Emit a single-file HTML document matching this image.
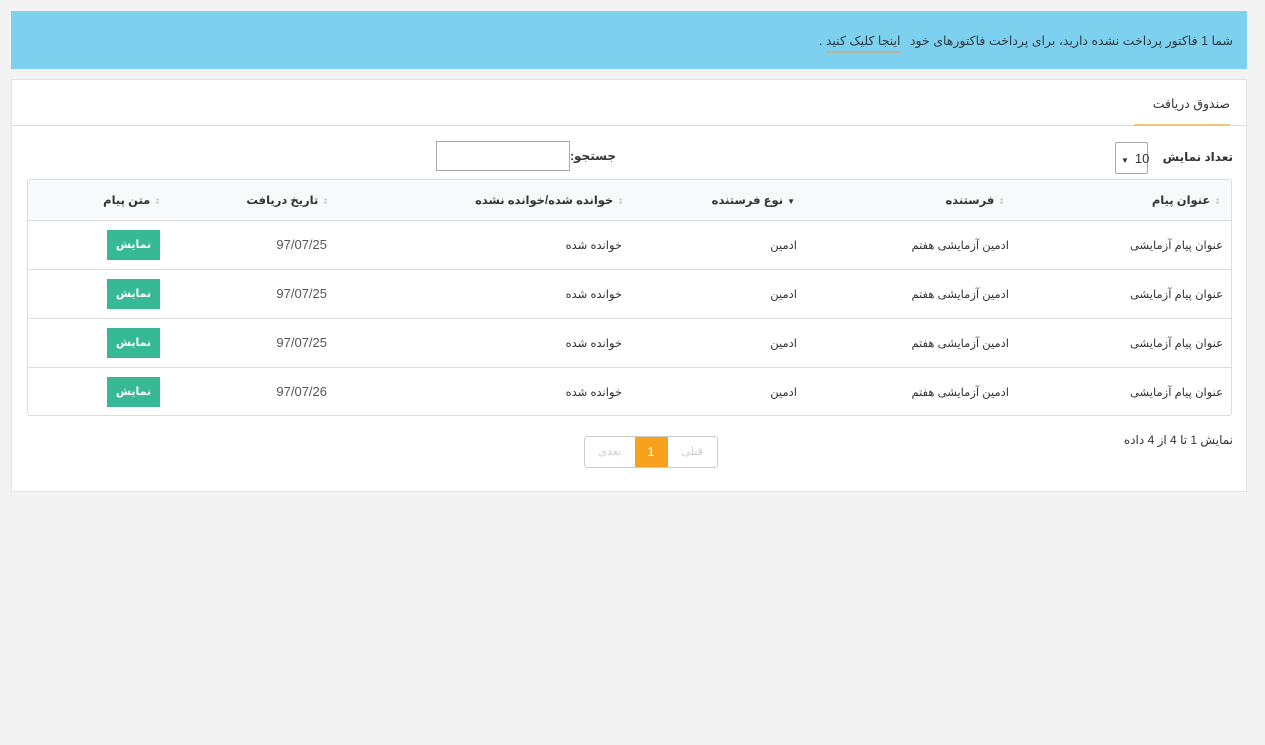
<!DOCTYPE html>
<html dir="rtl"><head><meta charset="utf-8"><style>
*{box-sizing:border-box;margin:0;padding:0}
body{width:1265px;height:745px;background:#f3f3f3;font-family:"Liberation Sans","DejaVu Sans",sans-serif;color:#333;font-size:12px;position:relative;overflow:hidden}
.alert{position:absolute;left:11px;top:11px;width:1236px;height:58px;background:#7dd1ef;padding:22px 14px 0 0;font-size:12.5px;color:#2b3a40}
.alert a{color:#2b3a40;text-decoration:none;border-bottom:2px solid #b9b59a;padding-bottom:3px;margin-right:6px}
.panel{position:absolute;left:11px;top:79px;width:1236px;height:413px;background:#fff;border:1px solid #e3e3e3}
.ph{height:46px;border-bottom:1px solid #ddd;position:relative}
.ph span{position:absolute;right:16px;top:16px;font-size:12.5px}
.ph i{position:absolute;right:16px;width:96px;bottom:-1px;height:2px;background:#f2c37a}
.lbl{position:absolute;font-weight:bold;font-size:12px}
.sel{position:absolute;left:1103px;top:62px;width:33px;height:32px;border:1px solid #aaa;border-radius:2px;font-size:13px;padding:8px 0 0 5px;direction:ltr;white-space:nowrap}
.sel b{font-size:8px;font-weight:normal;margin-right:6px}
.inp{position:absolute;left:424px;top:61px;width:134px;height:30px;border:1px solid #aaa}
.tbl{position:absolute;left:15px;top:99px;width:1205px;height:237px;border:1px solid #ddd;border-radius:3px;overflow:hidden}
table{border-collapse:collapse;width:100%;table-layout:fixed}
th{height:40px;background:#f7f9fb;font-weight:bold;font-size:11.5px;text-align:right;padding-right:10px;border-bottom:1px solid #ddd}
td{height:49px;font-size:11.5px;text-align:right;padding-right:8px;border-top:1px solid #ddd}
tr:nth-child(2) td{border-top:none}
th s{text-decoration:none;color:#ccc;font-size:8px;margin-left:4px}
.btn{display:inline-block;width:53px;height:30px;background:#36b994;color:#fff;font-weight:bold;text-align:center;line-height:30px;font-size:11px;margin-right:-3px}
.date{color:#555;font-size:13px}
.info{position:absolute;top:353px;font-size:12px}
.pg{position:absolute;left:572px;top:356px;height:32px;width:134px;border:1px solid #ccc;border-radius:3px;display:flex;direction:ltr;color:#ccc;font-size:11px}
.pg div{flex:1;text-align:center;line-height:30px}
.pg .a{background:#f7a11c;color:#fff;font-size:13px;flex:0 0 33px}
</style></head><body>
<div class="alert">شما 1 فاکتور پرداخت نشده دارید، برای پرداخت فاکتورهای خود <a>اینجا کلیک کنید</a> .</div>
<div class="panel">
<div class="ph"><span>صندوق دریافت</span><i></i></div>
<div class="lbl" style="right:13px;top:70px">تعداد نمایش</div>
<div class="sel"><b>▼</b>10</div>
<div class="lbl" style="right:630px;top:69px">جستجو:</div>
<div class="inp"></div>
<div class="tbl"><table>
<colgroup><col style="width:214px"><col style="width:212px"><col style="width:175px"><col style="width:295px"><col style="width:170px"><col></colgroup>
<tr><th><s>⇕</s>عنوان پیام</th><th style="padding-right:12px"><s>⇕</s>فرستنده</th><th><s style="color:#333">▼</s>نوع فرستنده</th><th style="padding-right:6px"><s>⇕</s>خوانده شده/خوانده نشده</th><th style="padding-right:6px"><s>⇕</s>تاریخ دریافت</th><th style="padding-right:4px"><s>⇕</s>متن پیام</th></tr>
<tr><td>عنوان پیام آزمایشی</td><td>ادمین آزمایشی هفتم</td><td>ادمین</td><td>خوانده شده</td><td class="date">97/07/25</td><td><span class="btn">نمایش</span></td></tr>
<tr><td>عنوان پیام آزمایشی</td><td>ادمین آزمایشی هفتم</td><td>ادمین</td><td>خوانده شده</td><td class="date">97/07/25</td><td><span class="btn">نمایش</span></td></tr>
<tr><td>عنوان پیام آزمایشی</td><td>ادمین آزمایشی هفتم</td><td>ادمین</td><td>خوانده شده</td><td class="date">97/07/25</td><td><span class="btn">نمایش</span></td></tr>
<tr><td>عنوان پیام آزمایشی</td><td>ادمین آزمایشی هفتم</td><td>ادمین</td><td>خوانده شده</td><td class="date">97/07/26</td><td><span class="btn">نمایش</span></td></tr>
</table></div>
<div class="info" style="right:13px">نمایش 1 تا 4 از 4 داده</div>
<div class="pg"><div>بعدی</div><div class="a">1</div><div>قبلی</div></div>
</div>
</body></html>
